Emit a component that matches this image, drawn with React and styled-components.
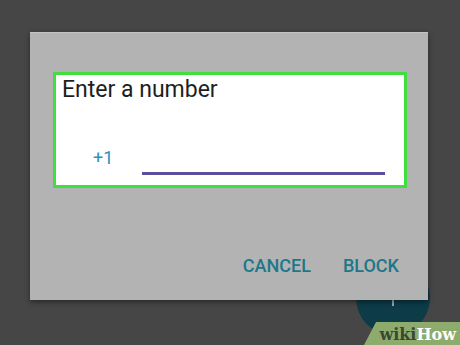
import React from 'react';
import styled, { createGlobalStyle } from 'styled-components';

const GlobalStyle = createGlobalStyle`
  html, body {
    margin: 0;
    padding: 0;
    background: #464646;
    font-family: Roboto, 'Liberation Sans', sans-serif;
  }
`;

const Screen = styled.div`
  position: relative;
  width: 460px;
  height: 345px;
  overflow: hidden;
  background: #464646;
  padding: 32px 0 0 30px;
  box-sizing: border-box;
`;

const Dialog = styled.div`
  position: relative;
  z-index: 2;
  width: 398px;
  height: 268px;
  background: #b3b3b3;
  border-top: 1px solid #c4c4c4;
  box-sizing: border-box;
  box-shadow: 0 2px 5px rgba(0, 0, 0, 0.45);
  display: flex;
  flex-direction: column;
  padding: 39px 0 0 23px;
`;

const Highlight = styled.div`
  width: 354px;
  height: 116px;
  box-sizing: border-box;
  border: 3px solid #3fdf3f;
  background: #ffffff;
  display: flex;
  flex-direction: column;
  padding: 1px 0 0 6px;
`;

const Title = styled.div`
  font-size: 23px;
  line-height: 27px;
  color: #1e1e1e;
`;

const NumberRow = styled.div`
  margin-top: auto;
  display: flex;
  align-items: flex-end;
  padding: 0 0 10px 31px;
`;

const Prefix = styled.span`
  font-size: 18px;
  line-height: 20px;
  color: #2b93b3;
  margin-bottom: 7px;
`;

const Underline = styled.div`
  width: 243px;
  height: 3px;
  margin-left: 29px;
  background: #5a4f9e;
`;

const Actions = styled.div`
  margin-top: auto;
  display: flex;
  justify-content: flex-end;
  gap: 32px;
  padding: 0 29px 24px 0;
`;

const ActionButton = styled.span`
  font-size: 18px;
  font-weight: 500;
  line-height: 20px;
  color: #1c7889;
`;

const Fab = styled.div`
  position: absolute;
  z-index: 1;
  left: 356px;
  top: 261px;
  width: 74px;
  height: 74px;
  border-radius: 50%;
  background: #0d3b48;
  display: flex;
  align-items: center;
  justify-content: center;
`;

const Badge = styled.div`
  position: absolute;
  z-index: 3;
  right: 0;
  bottom: 0;
  width: 96px;
  height: 23px;
  background: #8dab6c;
  clip-path: polygon(12px 0, 100% 0, 100% 100%, 0 100%);
  display: flex;
  align-items: center;
  justify-content: flex-end;
  padding: 2px 4px 0 0;
  box-sizing: border-box;
  font-family: 'DejaVu Serif', 'Liberation Serif', serif;
  font-weight: bold;
  font-size: 16px;
`;

const Wiki = styled.span`
  color: #3a4733;
`;

const How = styled.span`
  color: #ffffff;
`;

export default function App() {
  return (
    <>
      <GlobalStyle />
      <Screen>
        <Dialog>
          <Highlight>
            <Title>Enter a number</Title>
            <NumberRow>
              <Prefix>+1</Prefix>
              <Underline />
            </NumberRow>
          </Highlight>
          <Actions>
            <ActionButton>CANCEL</ActionButton>
            <ActionButton>BLOCK</ActionButton>
          </Actions>
        </Dialog>
        <Fab>
          <svg width="20" height="20" viewBox="0 0 20 20">
            <path d="M10 2v16M2 10h16" stroke="#8fa9b0" strokeWidth="2" />
          </svg>
        </Fab>
        <Badge>
          <Wiki>wiki</Wiki>
          <How>How</How>
        </Badge>
      </Screen>
    </>
  );
}
